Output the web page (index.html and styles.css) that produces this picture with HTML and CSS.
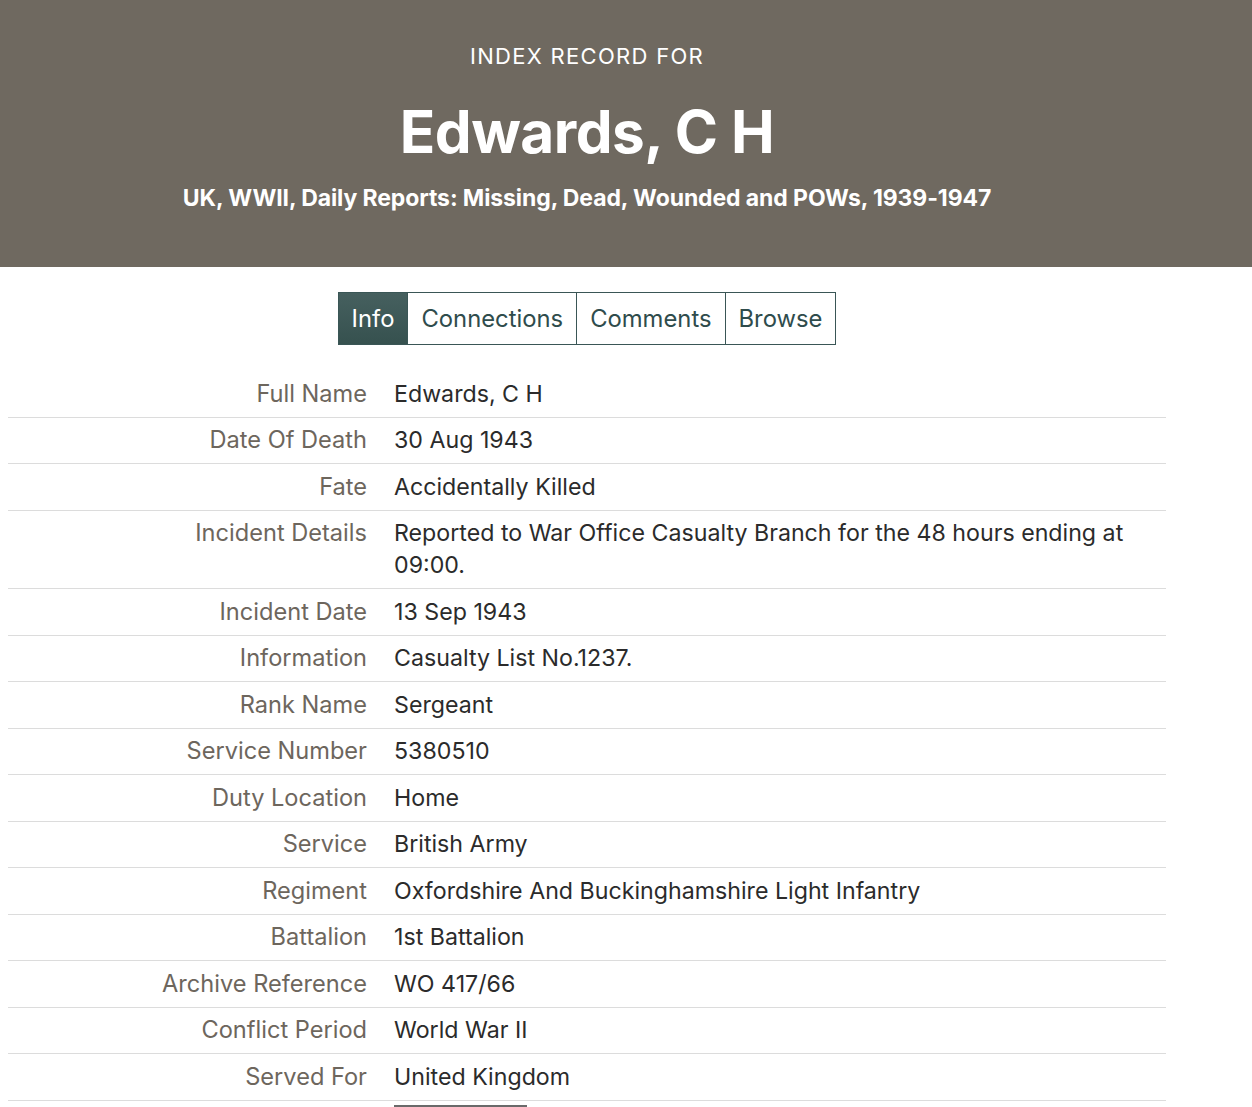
FILE: index.html
```html
<!DOCTYPE html>
<html lang="en">
<head>
<meta charset="utf-8">
<title>Edwards, C H - Index Record</title>
<link rel="stylesheet" href="styles.css">
</head>
<body>
<header class="hero">
  <div class="wrap hero-inner">
    <p class="hero-kicker">INDEX RECORD FOR</p>
    <h1 class="hero-name">Edwards, C H</h1>
    <p class="hero-collection">UK, WWII, Daily Reports: Missing, Dead, Wounded and POWs, 1939-1947</p>
  </div>
</header>

<main class="wrap content">
  <nav class="tabs">
    <a class="tab tab-active" href="#">Info</a>
    <a class="tab" href="#">Connections</a>
    <a class="tab" href="#">Comments</a>
    <a class="tab" href="#">Browse</a>
  </nav>

  <dl class="record">
    <div class="row"><dt>Full Name</dt><dd>Edwards, C H</dd></div>
    <div class="row"><dt>Date Of Death</dt><dd>30 Aug 1943</dd></div>
    <div class="row"><dt>Fate</dt><dd>Accidentally Killed</dd></div>
    <div class="row"><dt>Incident Details</dt><dd>Reported to War Office Casualty Branch for the 48 hours ending at 09:00.</dd></div>
    <div class="row"><dt>Incident Date</dt><dd>13 Sep 1943</dd></div>
    <div class="row"><dt>Information</dt><dd>Casualty List No.1237.</dd></div>
    <div class="row"><dt>Rank Name</dt><dd>Sergeant</dd></div>
    <div class="row"><dt>Service Number</dt><dd>5380510</dd></div>
    <div class="row"><dt>Duty Location</dt><dd>Home</dd></div>
    <div class="row"><dt>Service</dt><dd>British Army</dd></div>
    <div class="row"><dt>Regiment</dt><dd>Oxfordshire And Buckinghamshire Light Infantry</dd></div>
    <div class="row"><dt>Battalion</dt><dd>1st Battalion</dd></div>
    <div class="row"><dt>Archive Reference</dt><dd>WO 417/66</dd></div>
    <div class="row"><dt>Conflict Period</dt><dd>World War II</dd></div>
    <div class="row"><dt>Served For</dt><dd>United Kingdom</dd></div>
  </dl>

  <div class="actions">
    <span class="action-bar"></span>
  </div>
</main>
</body>
</html>
```

FILE: styles.css
```css
html, body {
  margin: 0;
  padding: 0;
  background: #ffffff;
}

body {
  font-family: Inter, "Liberation Sans", Arial, sans-serif;
  color: #2e2e2e;
}

/* Shared content column */
.wrap {
  width: 1158px;
  margin-left: 8px;
}

/* Title banner */
.hero {
  background: #6f6960;
  color: #ffffff;
  height: 267px;
}

.hero-inner {
  padding-top: 41px;
  text-align: center;
}

.hero-kicker {
  margin: 0;
  font-size: 22px;
  line-height: 30px;
  font-weight: 400;
  letter-spacing: 1.3px;
}

.hero-name {
  margin: 26px 0 0;
  font-size: 58.5px;
  line-height: 70px;
  font-weight: 700;
  letter-spacing: -0.5px;
}

.hero-collection {
  margin: 16px 0 0;
  font-size: 23px;
  line-height: 30px;
  font-weight: 700;
  letter-spacing: -0.1px;
}

/* Tabs */
.tabs {
  display: flex;
  justify-content: center;
  margin-top: 25px;
}

.tab {
  display: block;
  box-sizing: border-box;
  height: 53px;
  padding: 0 13px;
  border: 1px solid #3a5656;
  border-left-width: 0;
  font-size: 23.8px;
  line-height: 51px;
  color: #2f4c4c;
  text-decoration: none;
  background: #ffffff;
}

.tab:first-child {
  border-left-width: 1px;
}

.tab-active {
  background: linear-gradient(#46605f, #36514f);
  color: #ffffff;
}

/* Record list */
.record {
  margin: 26px 0 0;
}

.row {
  display: grid;
  grid-template-columns: 359px 1fr;
  column-gap: 27px;
  border-bottom: 1px solid #dcdcdc;
  padding: 6.75px 0;
}

.row dt,
.row dd {
  margin: 0;
  line-height: 32px;
}

.row dt {
  font-size: 23.6px;
  text-align: right;
  color: #6d665d;
}

.row dd {
  font-size: 23.2px;
  color: #2b2b2b;
  padding-right: 30px;
}

.actions {
  padding-left: 386px;
  padding-top: 4px;
}

.action-bar {
  display: block;
  width: 133px;
  border-top: 2px solid #6a6a6a;
}
```
